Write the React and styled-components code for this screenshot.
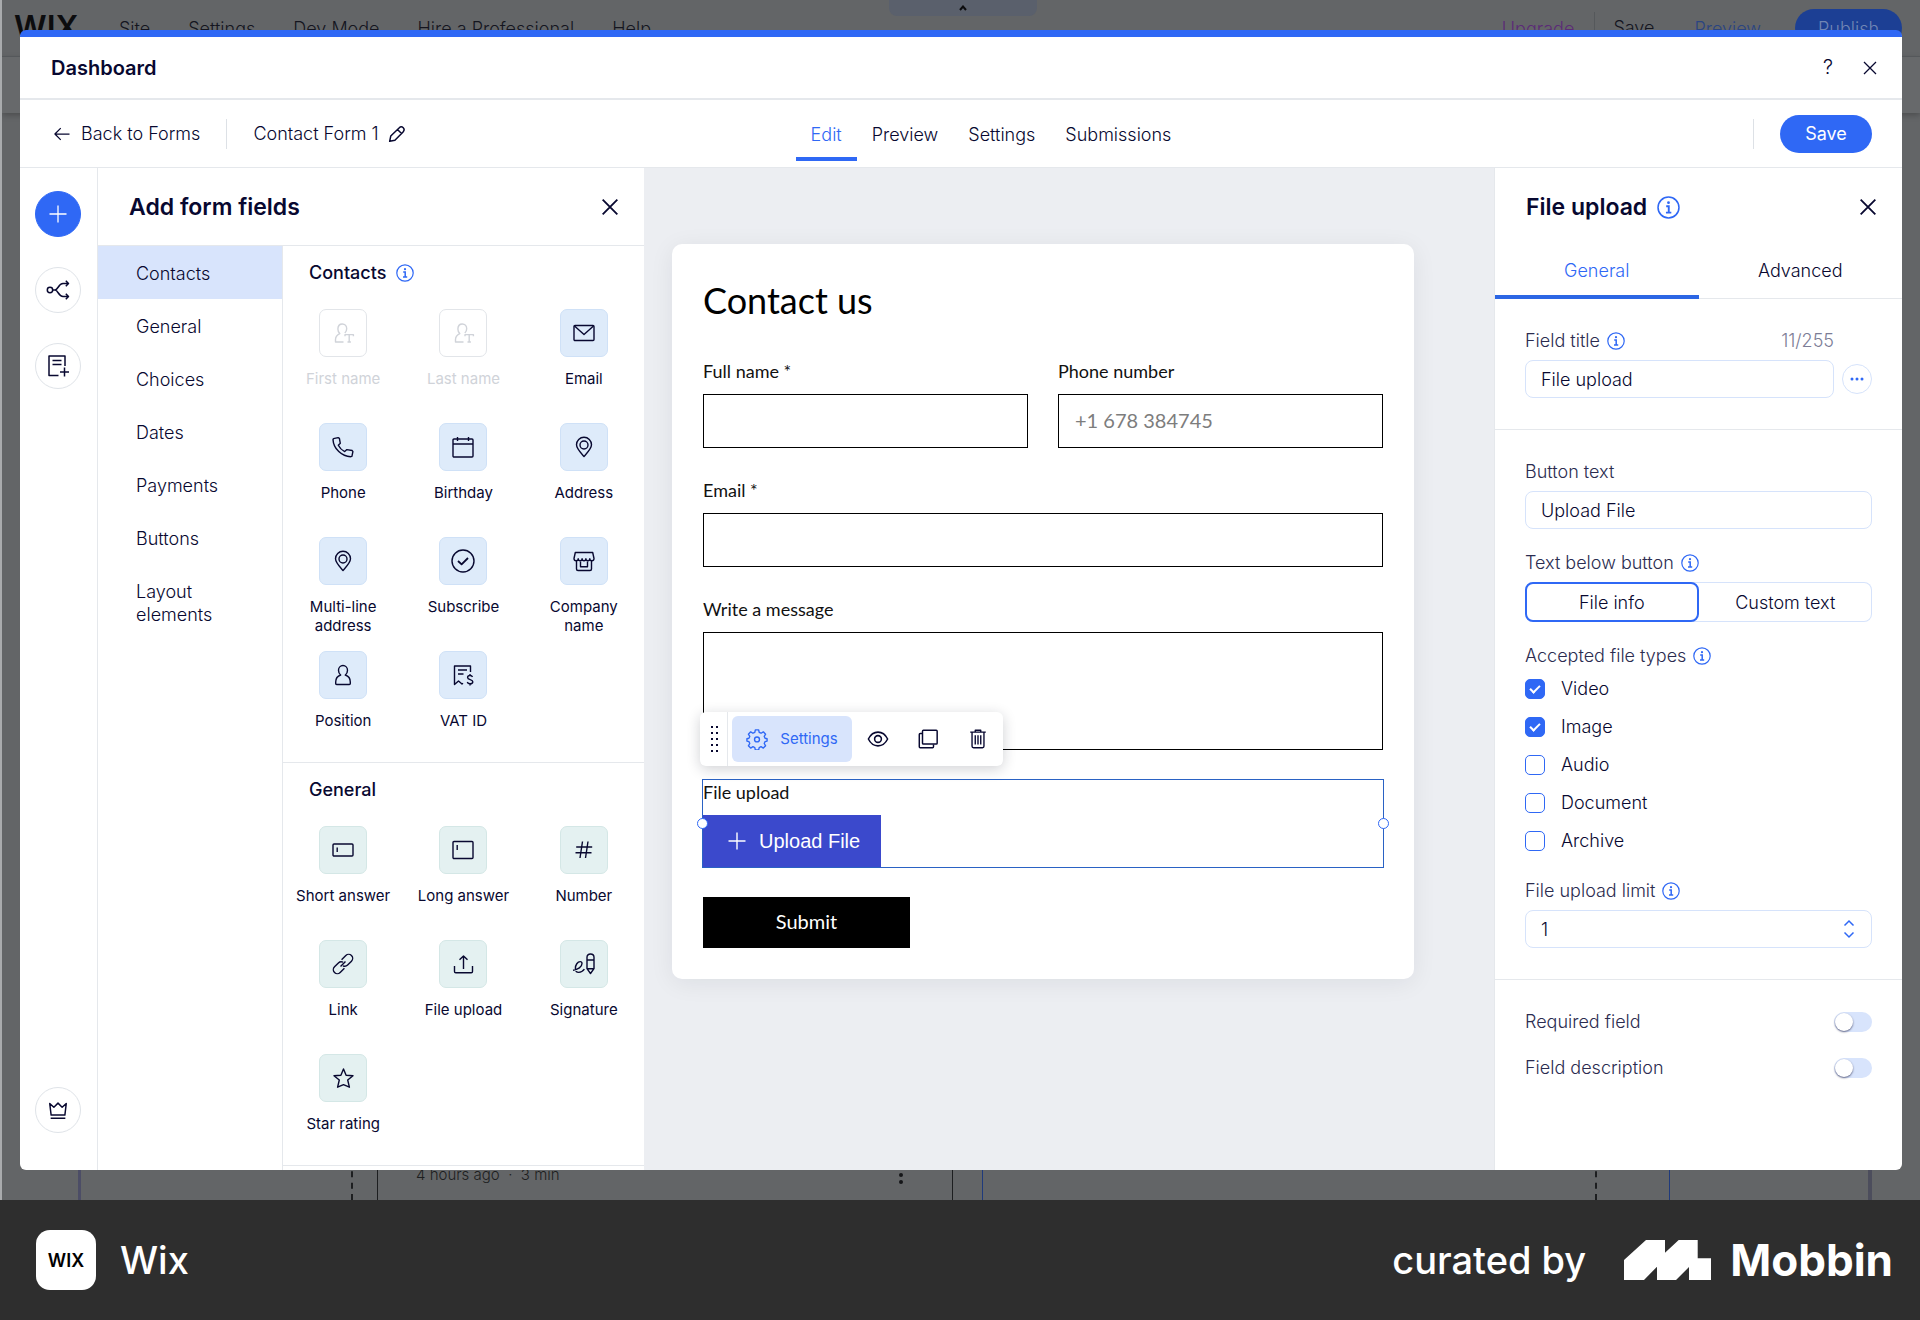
import React from "react";
import styled, { createGlobalStyle, css } from "styled-components";

const ui = `Inter, "Noto Sans", sans-serif`;
const formFont = `Lato, "Open Sans", sans-serif`;
const ink = "#080830";
const muted = "#2b2c50";
const blue = "#2f68f5";
const line = "#e5e8ec";

const GlobalStyle = createGlobalStyle`
  * { box-sizing: border-box; }
  body { margin: 0; font-family: ${ui}; color: ${ink}; background: #2e2e2e; }
  button, input, textarea { font: inherit; color: inherit; margin: 0; }
  button { padding: 0; border: 0; background: none; cursor: pointer; }
  h1, h2, h3, p { margin: 0; font-weight: inherit; font-size: inherit; }
`;

const Page = styled.div`
  min-height: 100vh;
  display: flex;
  flex-direction: column;
`;

const Stage = styled.div`
  flex: 1;
  display: grid;
  > * { grid-area: 1 / 1; min-width: 0; }
`;

/* ---------- dimmed editor ---------- */
const Editor = styled.div`
  display: flex;
  flex-direction: column;
  border-left: 2px solid #a9abad;
  background: #636567;
  overflow: hidden;
  font-size: 18px;
  font-weight: 300;
`;
const EditorBar = styled.div`
  position: relative;
  height: 57px;
  padding: 0 18px 0 12px;
  display: flex;
  align-items: center;
  border-bottom: 1px solid #55585b;
  color: #14151f;
`;
const EditorLogo = styled.span`
  width: 105px;
  font-size: 32px;
  line-height: 40px;
  font-weight: 600;
  color: #0c0c0e;
`;
const EditorMenu = styled.nav`
  display: flex;
  gap: 38px;
  flex: 1;
`;
const EditorLink = styled.a`
  color: ${(p) => p.$color || "#14151f"};
  text-decoration: none;
`;
const EditorActions = styled.div`
  display: flex;
  align-items: center;
  gap: 40px;
`;
const EditorSave = styled.div`
  border-left: 1px solid #55585b;
  margin-left: -20px;
  padding-left: 18px;
  line-height: 32px;
`;
const Publish = styled.button`
  width: 107px;
  height: 38px;
  margin-left: -6px;
  border-radius: 19px;
  background: #1c3f94;
  color: #7186b4;
`;
const PullTab = styled.div`
  position: absolute;
  top: 0;
  left: 887px;
  width: 148px;
  height: 16px;
  display: grid;
  place-items: center;
  border-radius: 0 0 8px 8px;
  background: #5a606c;
`;
const EditorSub = styled.div`
  height: 56px;
  background: #67696b;
  box-shadow: 0 2px 6px rgba(0, 0, 0, 0.25);
`;
const EditorCanvas = styled.div`
  flex: 1;
  position: relative;
`;
const Guide = styled.span`
  position: absolute;
  bottom: 0;
  left: ${(p) => p.$x}px;
  height: 40px;
  border-left: ${(p) => p.$w || 1}px ${(p) => (p.$dashed ? "dashed" : "solid")} ${(p) => p.$color || "#1d1e20"};
`;
const CanvasNote = styled.span`
  position: absolute;
  bottom: 15px;
  left: 414px;
  font-size: 15px;
  line-height: 20px;
  color: #1d1e20;
  white-space: pre;
`;
const CanvasDots = styled.span`
  position: absolute;
  bottom: 16px;
  left: 897px;
  display: grid;
  gap: 3px;
  i { width: 4px; height: 4px; border-radius: 50%; background: #151618; }
`;

/* ---------- modal ---------- */
const Modal = styled.section`
  position: relative;
  margin: 30px 18px 30px 20px;
  display: flex;
  flex-direction: column;
  background: #fff;
  border-top: 7px solid ${blue};
  border-radius: 6px;
  overflow: hidden;
  font-size: 18px;
  font-weight: 300;
  line-height: 23px;
`;
const ModalHeader = styled.header`
  height: 63px;
  padding: 0 20px 0 31px;
  display: flex;
  align-items: center;
  justify-content: space-between;
  border-bottom: 2px solid ${line};
`;
const ModalTitle = styled.h1`
  padding-top: 2px;
  font-size: 20px;
  font-weight: 600;
`;
const HeaderTools = styled.div`
  display: flex;
  align-items: center;
  gap: 18px;
`;
const IconButton = styled.button`
  width: 24px;
  height: 24px;
  display: grid;
  place-items: center;
  font-size: 20px;
`;
const Toolbar = styled.div`
  height: 68px;
  padding: 0 30px 0 32px;
  display: grid;
  grid-template-columns: 1fr auto 1fr;
  align-items: center;
  border-bottom: 1px solid ${line};
`;
const ToolbarSide = styled.div`
  display: flex;
  align-items: center;
  justify-content: ${(p) => (p.$end ? "flex-end" : "flex-start")};
  gap: 26px;
`;
const Divider = styled.span`
  width: 1px;
  height: 30px;
  background: #dde1e6;
`;
const InlineButton = styled.button`
  display: flex;
  align-items: center;
  gap: 9px;
`;
const FormName = styled.div`
  display: flex;
  align-items: center;
  gap: 8px;
`;
const Tabs = styled.nav`
  align-self: start;
  display: flex;
  margin-left: 58px;
`;
const Tab = styled.button`
  height: 61px;
  padding: 11px 15px 0;
  border-bottom: 4px solid ${(p) => (p.$active ? blue : "transparent")};
  color: ${(p) => (p.$active ? blue : ink)};
`;
const SaveButton = styled.button`
  width: 92px;
  height: 38px;
  border-radius: 19px;
  background: ${blue};
  color: #fff;
  font-weight: 400;
`;

const Body = styled.div`
  flex: 1;
  display: grid;
  grid-template-columns: 78px 546px minmax(0, 1fr) 408px;
`;

const Rail = styled.aside`
  padding: 23px 0 37px 15px;
  display: flex;
  flex-direction: column;
  gap: 30px;
  border-right: 1px solid ${line};
`;
const RailButton = styled.button`
  width: 46px;
  height: 46px;
  display: grid;
  place-items: center;
  border-radius: 50%;
  border: 1px solid ${(p) => (p.$primary ? blue : "#dfe3e8")};
  background: ${(p) => (p.$primary ? blue : "#fff")};
  color: ${(p) => (p.$primary ? "#fff" : ink)};
  ${(p) => p.$last && css`margin-top: auto;`}
`;

/* ---------- add fields panel ---------- */
const AddPanel = styled.section`
  display: flex;
  flex-direction: column;
`;
const PanelHeader = styled.header`
  height: 78px;
  padding: 0 22px 0 31px;
  display: flex;
  align-items: center;
  justify-content: space-between;
  ${(p) => p.$ruled && css`border-bottom: 1px solid ${line};`}
`;
const PanelTitle = styled.h2`
  display: flex;
  align-items: center;
  gap: 10px;
  font-size: 23px;
  line-height: 30px;
  font-weight: 600;
`;
const PanelColumns = styled.div`
  flex: 1;
  display: grid;
  grid-template-columns: 185px 1fr;
`;
const Categories = styled.nav`
  border-right: 1px solid ${line};
  display: flex;
  flex-direction: column;
`;
const Category = styled.button`
  padding: 16px 38px 14px;
  text-align: left;
  background: ${(p) => (p.$active ? "#d8e4fc" : "transparent")};
`;
const FieldSection = styled.section`
  padding: 16px 0 13px;
  border-bottom: 1px solid ${line};
`;
const SectionTitle = styled.h3`
  display: flex;
  align-items: center;
  gap: 10px;
  padding-left: 26px;
  margin-bottom: 25px;
  line-height: 22px;
  font-weight: 500;
`;
const FieldGrid = styled.div`
  display: grid;
  grid-template-columns: repeat(3, 1fr);
  grid-auto-rows: 98px;
  gap: 16px 0;
`;
const Field = styled.button`
  display: flex;
  flex-direction: column;
  align-items: center;
  gap: 12px;
  font-size: 15px;
  line-height: 19px;
  font-weight: 400;
  color: ${(p) => (p.disabled ? "#d0d3d9" : ink)};
`;
const tones = {
  blue: ["#deebfa", "#cfe1f7"],
  green: ["#e4f1f1", "#d4e7e6"],
  off: ["#fff", "#e2e5e9"],
};
const Tile = styled.span`
  width: 48px;
  height: 48px;
  display: grid;
  place-items: center;
  border-radius: 7px;
  background: ${(p) => tones[p.$tone][0]};
  border: 1px solid ${(p) => tones[p.$tone][1]};
`;
const TileLabel = styled.span`
  max-width: 104px;
`;

/* ---------- canvas ---------- */
const Canvas = styled.main`
  padding: 76px 80px 76px 28px;
  background: #eceef2;
  font-family: ${formFont};
  font-weight: 400;
  color: #111;
`;
const Card = styled.form`
  display: flex;
  flex-direction: column;
  gap: 30px;
  padding: 31px;
  border-radius: 10px;
  background: #fff;
  box-shadow: 0 4px 24px rgba(20, 23, 40, 0.07);
  font-size: 18px;
  line-height: 24px;
`;
const CardTitle = styled.h2`
  padding-bottom: 4px;
  font-size: 36px;
  line-height: 50px;
  color: #000;
`;
const FormRow = styled.div`
  display: grid;
  grid-template-columns: 1fr 1fr;
  gap: 30px;
`;
const FormField = styled.div`
  display: flex;
  flex-direction: column;
  align-items: flex-start;
  gap: 11px;
`;
const control = css`
  width: 100%;
  padding: 0 16px 2px;
  border: 1px solid #000;
  border-radius: 0;
  background: #fff;
  font-size: 20px;
  &::placeholder { color: #7d7d7d; opacity: 1; }
`;
const FormInput = styled.input`
  ${control}
  height: 54px;
`;
const FormArea = styled.textarea`
  ${control}
  height: 118px;
  resize: none;
  display: block;
`;
const SelectedField = styled(FormField)`
  position: relative;
  &::after {
    content: "";
    position: absolute;
    inset: -1px;
    border: 1px solid #2a62c4;
    pointer-events: none;
  }
`;
const Handle = styled.span`
  position: absolute;
  z-index: 1;
  top: 50%;
  ${(p) => p.$side}: -6px;
  width: 11px;
  height: 11px;
  margin-top: -6px;
  border: 1px solid ${blue};
  border-radius: 50%;
  background: #fff;
`;
const UploadButton = styled.button`
  height: 52px;
  padding: 0 21px 0 22px;
  display: flex;
  align-items: center;
  gap: 10px;
  background: #3b49cc;
  color: #fff;
  font: 20px "Liberation Sans", sans-serif;
`;
const SubmitButton = styled.button`
  width: 207px;
  height: 51px;
  padding-bottom: 3px;
  background: #000;
  color: #fff;
  font-size: 20px;
`;
const FloatingBar = styled.div`
  position: absolute;
  z-index: 2;
  left: -3px;
  top: -68px;
  height: 54px;
  display: flex;
  align-items: center;
  border-radius: 6px;
  background: #fff;
  box-shadow: 0 3px 14px rgba(20, 23, 40, 0.2);
  color: ${ink};
  font: 15px/20px ${ui};
`;
const Grip = styled.span`
  width: 28px;
  height: 54px;
  padding-left: 3px;
  display: grid;
  place-items: center;
  border-right: 1px solid ${line};
`;
const BarSettings = styled.button`
  width: 120px;
  height: 46px;
  margin: 0 1px 0 4px;
  display: flex;
  align-items: center;
  justify-content: center;
  gap: 12px;
  border-radius: 6px;
  background: #d8e4fc;
  color: ${blue};
`;
const BarButton = styled.button`
  width: 50px;
  height: 46px;
  display: grid;
  place-items: center;
`;

/* ---------- settings panel ---------- */
const Settings = styled.aside`
  border-left: 1px solid ${line};
`;
const SideTabs = styled.div`
  display: grid;
  grid-template-columns: 1fr 1fr;
  border-bottom: 1px solid ${line};
`;
const SideTab = styled.button`
  height: 53px;
  margin-bottom: -1px;
  border-bottom: 4px solid ${(p) => (p.$active ? "#2c66e4" : "transparent")};
  color: ${(p) => (p.$active ? blue : ink)};
`;
const Group = styled.div`
  padding: 30px 30px 31px;
  display: flex;
  flex-direction: column;
  gap: 22px;
  ${(p) => p.$ruled && css`border-bottom: 1px solid ${line};`}
`;
const Setting = styled.div`
  display: flex;
  flex-direction: column;
  gap: 7px;
`;
const LabelRow = styled.div`
  display: flex;
  align-items: center;
  gap: 7px;
  color: ${muted};
  line-height: 24px;
`;
const Counter = styled.span`
  margin-left: auto;
  padding-right: 38px;
  color: #7c7d96;
`;
const InputRow = styled.div`
  display: flex;
  align-items: center;
  gap: 8px;
`;
const TextBox = styled.input`
  flex: 1;
  min-width: 0;
  height: 38px;
  padding: 0 15px;
  border: 1px solid #d6e3fb;
  border-radius: 8px;
  background: #fff;
  outline: 0;
`;
const MoreButton = styled.button`
  width: 30px;
  height: 30px;
  display: grid;
  place-items: center;
  border: 1px solid #d6e3fb;
  border-radius: 50%;
  color: ${blue};
`;
const Segments = styled.div`
  display: grid;
  grid-template-columns: 1fr 1fr;
  height: 40px;
  border-radius: 8px;
  box-shadow: inset 0 0 0 1px #d6e3fb;
`;
const Segment = styled.button`
  border-radius: 8px;
  ${(p) => p.$active && css`border: 2px solid ${blue};`}
`;
const Checks = styled.div`
  padding: 2px 0 4px;
  display: flex;
  flex-direction: column;
  gap: 14px;
`;
const CheckRow = styled.label`
  display: flex;
  align-items: center;
  gap: 16px;
  line-height: 24px;
`;
const CheckBox = styled.input`
  appearance: none;
  width: 20px;
  height: 20px;
  display: grid;
  place-items: center;
  border: 1px solid ${blue};
  border-radius: 5px;
  background: #fff;
  &:checked { background: ${blue}; }
  &:checked::before {
    content: "";
    width: 8px;
    height: 4px;
    margin-top: -3px;
    border-left: 2px solid #fff;
    border-bottom: 2px solid #fff;
    transform: rotate(-45deg);
  }
`;
const NumberWrap = styled.div`
  display: flex;
  align-items: center;
  height: 38px;
  padding-right: 16px;
  border: 1px solid #d6e3fb;
  border-radius: 8px;
  color: ${blue};
`;
const NumberBox = styled.input`
  flex: 1;
  min-width: 0;
  padding: 0 15px;
  border: 0;
  outline: 0;
  background: none;
  color: ${ink};
  appearance: textfield;
  &::-webkit-inner-spin-button { display: none; }
`;
const SwitchRow = styled.label`
  display: flex;
  align-items: center;
  justify-content: space-between;
  line-height: 24px;
  color: ${muted};
`;
const Switch = styled.input`
  appearance: none;
  width: 38px;
  height: 20px;
  border-radius: 10px;
  background: #d8e4fc;
  &::before {
    content: "";
    display: block;
    width: 18px;
    height: 18px;
    margin: 1px;
    border-radius: 50%;
    background: #fff;
    box-shadow: 0 1px 2px rgba(8, 8, 48, 0.6);
  }
`;

/* ---------- footer ---------- */
const Footer = styled.footer`
  height: 120px;
  padding: 0 27px 0 36px;
  display: flex;
  align-items: center;
  justify-content: space-between;
  background: #2e2e2e;
  color: #fff;
  font-size: 38px;
  font-weight: 500;
`;
const FooterSide = styled.div`
  display: flex;
  align-items: center;
  gap: ${(p) => p.$gap}px;
`;
const AppIcon = styled.span`
  width: 60px;
  height: 60px;
  display: grid;
  place-items: center;
  border-radius: 14px;
  background: #fff;
  color: #000;
  font-size: 18px;
  font-weight: 600;
`;
const MobbinMark = styled.span`
  display: flex;
  align-items: center;
  gap: 19px;
  font-size: 44px;
  font-weight: 700;
`;

/* ---------- icons ---------- */
const Svg = ({ size = 24, w = 1.4, children, box = 24 }) => (
  <svg width={size} height={size} viewBox={`0 0 ${box} ${box}`} fill="none" stroke="currentColor" strokeWidth={w} strokeLinejoin="round" aria-hidden="true">
    {children}
  </svg>
);

const InfoSvg = styled.svg`
  color: ${blue};
  flex: none;
`;
const Info = ({ size = 18 }) => (
  <InfoSvg width={size} height={size} viewBox="0 0 18 18" fill="none" stroke="currentColor" strokeWidth="1.2" role="img" aria-label="More info">
    <circle cx="9" cy="9" r="8.2" />
    <circle cx="9" cy="5.2" r="1.1" fill="currentColor" stroke="none" />
    <path d="M7.2 8h2v5M7 13h4.2" strokeWidth="1.5" />
  </InfoSvg>
);

const personT = (
  <>
    <path d="M12.500 21H4.500v-2.500C4.500 15.800 6 14 8.800 12.600 7.500 11.600 6.900 10 6.900 8c0-3 1.900-5 4.400-5s4.400 2 4.400 4.700c0 1.800-.7 3.200-1.900 4.300" />
    <path d="M14 15.300V13.600h8.400v1.700M18.200 13.600V21M16.500 21h3.400" />
  </>
);
const pin = (
  <>
    <path d="M12 21.500C8 17 4.500 13.500 4.500 9.800a7.500 7.500 0 0 1 15 0C19.500 13.500 16 17 12 21.500z" />
    <circle cx="12" cy="10" r="4" />
  </>
);
const icons = {
  person: personT,
  mail: (
    <>
      <rect x="2" y="4.500" width="20" height="15" rx="1" />
      <path d="M2.500 5l9.500 8.500L21.500 5" />
    </>
  ),
  phone: (
    <path d="M2.500 3.600l4.600-1 1.300.8.9 4.900-2 2c1.500 3 3.300 4.800 6.400 6.300l2.200-2 5.300.9.700 1.200-1 4.600-1.200.4C11 21.500 2.500 14 2 4.600z" />
  ),
  calendar: (
    <>
      <rect x="2" y="4" width="20" height="18" rx="1" />
      <path d="M2 9h20M6.500 2v4M17.500 2v4" />
    </>
  ),
  pin,
  check: (
    <>
      <circle cx="12" cy="12" r="11" />
      <path d="M7 12l3.600 3.400L17 9" strokeWidth="1.8" />
    </>
  ),
  store: (
    <>
      <path d="M3.300 3.500h17.400l1.300 6c0 1.400-1 2.200-2.200 2.200s-2-.8-2-2c0 1.200-.8 2-1.900 2s-2-.8-2-2c0 1.200-.8 2-1.900 2s-1.900-.8-1.900-2c0 1.200-.8 2-2 2s-1.900-.8-1.900-2c0 1.200-.8 2-2 2S2 10.900 2 9.500z" />
      <path d="M4.500 11.700V20c0 .9.600 1.500 1.500 1.500h12c.9 0 1.500-.6 1.500-1.500v-8.300M8.500 12.500v5.200h7v-5.200" />
    </>
  ),
  position: (
    <path d="M9.700 12C8.300 11 7.500 9.400 7.500 7.300 7.500 4.600 9.500 2.500 12 2.500s4.500 2.100 4.500 4.800c0 2.100-.8 3.700-2.200 4.700 3 1 5 3.500 5 7v1.500c0 .6-.4 1-1 1H5.700c-.6 0-1-.4-1-1V19c0-3.500 2-6 5-7z" />
  ),
  vat: (
    <>
      <path d="M19.500 9V3h-16v18.500l4-3.500 3.500 3 1-.8M7 7h9M7 11h5.500" />
      <path d="M21.500 14c-.4-1-1.300-1.500-2.500-1.500-1.400 0-2.400.8-2.400 1.900 0 2.800 5.200 1.500 5.200 4.300 0 1.200-1.100 2.100-2.700 2.100-1.400 0-2.500-.7-2.800-1.800M19 11v1.500M19 21v1.600" />
    </>
  ),
  short: (
    <>
      <rect x="2" y="6" width="20" height="12" rx="1" />
      <path d="M6.200 9.500v4.500" />
    </>
  ),
  long: (
    <>
      <rect x="2" y="3.500" width="20" height="17" rx="1" />
      <path d="M6.200 7v5" />
    </>
  ),
  hash: <path d="M10.500 3.500l-2.500 16.500M16 3.500l-2.500 16.500M4.200 9h16M3.500 14.700h16" />,
  link: (
    <g transform="rotate(-45 12 12)">
      <path d="M10 16H4a4 4 0 0 1 0-8h5.500a4 4 0 0 1 3.800 2.800M14 8h6a4 4 0 0 1 0 8h-5.500a4 4 0 0 1-3.800-2.800M8.500 12h7" />
    </g>
  ),
  upload: <path d="M12.500 17V4M8.500 7.800l4-3.900 4 3.900M3.500 14v5.500c0 .8.500 1.300 1.300 1.300h15.400c.8 0 1.300-.5 1.300-1.300V14" />,
  signature: (
    <>
      <path d="M1 18.200c5-.6 9-3.400 9-6.600 0-1.200-.7-2-1.800-2-2.700 0-4.800 3.500-4.800 6.600 0 2.600 1.200 4.200 3.300 4.200 2.500 0 4.500-1.500 5.700-3.200" />
      <path d="M15 5.200c0-1.900 1.400-3.200 3.500-3.200S22 3.300 22 5.200v11.500l-3.500 4.800-3.500-4.800zM15 8h7M15 16.700h7" />
    </>
  ),
  star: <path d="M12.500 3l2.600 6.200 6.900.5-5.300 4.300 1.700 7.200-5.900-2.600-5.900 2.600 1.700-7.200L3 9.700l6.900-.5z" />,
  plus: <path d="M12 3.500v17M3.500 12h17" />,
  flow: (
    <>
      <circle cx="4" cy="12" r="2.700" />
      <path d="M6.700 12H9c3 0 3.500-6.500 8-6.500h5M9 12c3 0 3.500 6.500 8 6.500h5M19.800 2.800l2.700 2.700-2.700 2.700M19.800 15.800l2.700 2.700-2.700 2.700" />
    </>
  ),
  notePlus: (
    <>
      <path d="M19 12V2H3v19.500h9.500M6.500 6.500h9M6.500 10.500h9M18.500 13.500v9M14 18h9" />
    </>
  ),
  crown: <path d="M4.500 17.500L3 5l4.500 4L12 4.500 16.500 9 21 5l-1.500 12.500zM4 21h16" />,
  close: <path d="M4 4l16 16M20 4L4 20" />,
  back: <path d="M21 12H3.500M10.500 5l-7 7 7 7" />,
  pencil: (
    <path d="M14.500 4.700c1.700-1.700 3.500-1.700 5-.2s1.500 3.300-.2 5L9.500 19.500 3.200 20.800 4.500 14.500zM12.500 6.500l5 5" />
  ),
  gear: (
    <>
      <path d="M10.200 2h3.600l.6 2.800 2 .9 2.500-1.500 2.500 2.500-1.500 2.500.9 2 2.200.5v2.600l-2.300.6-.8 2 1.500 2.500-2.500 2.500-2.500-1.500-2 .9-.6 2.700h-3.600l-.6-2.700-2-.9-2.500 1.500-2.500-2.500 1.500-2.500-.8-2-2.300-.6v-2.600l2.200-.5.9-2-1.500-2.500 2.500-2.500 2.500 1.500 2-.9z" />
      <circle cx="12" cy="12.500" r="2.700" />
    </>
  ),
  eye: (
    <>
      <path d="M1.500 12C4 7 7.500 4.500 12 4.500S20 7 22.500 12C20 17 16.500 19.500 12 19.500S4 17 1.500 12z" />
      <circle cx="12" cy="12" r="3.700" />
    </>
  ),
  copy: (
    <>
      <rect x="6" y="2.500" width="16" height="15" rx="1" />
      <path d="M6 6H3.500c-.6 0-1 .4-1 1v13.500c0 .6.400 1 1 1h13.500c.6 0 1-.4 1-1V18" />
    </>
  ),
  trash: (
    <path d="M3.500 4.500h17M9 4.500V2.500h6v2M5.500 4.500V20c0 1 .6 1.600 1.600 1.600h9.800c1 0 1.600-.6 1.600-1.600V4.500M9 8v10M12 8v10M15 8v10" />
  ),
};
const Icon = ({ name, size, w }) => (
  <Svg size={size} w={w}>{icons[name]}</Svg>
);

const contactFields = [
  ["First name", "person", "off"],
  ["Last name", "person", "off"],
  ["Email", "mail"],
  ["Phone", "phone"],
  ["Birthday", "calendar"],
  ["Address", "pin"],
  ["Multi-line address", "pin"],
  ["Subscribe", "check"],
  ["Company name", "store"],
  ["Position", "position"],
  ["VAT ID", "vat"],
];
const generalFields = [
  ["Short answer", "short"],
  ["Long answer", "long"],
  ["Number", "hash"],
  ["Link", "link"],
  ["File upload", "upload"],
  ["Signature", "signature"],
  ["Star rating", "star"],
];

const FieldList = ({ fields, tone }) => (
  <FieldGrid>
    {fields.map(([label, icon, own]) => (
      <Field key={label} type="button" disabled={own === "off"}>
        <Tile $tone={own || tone}>
          <Icon name={icon} />
        </Tile>
        <TileLabel>{label}</TileLabel>
      </Field>
    ))}
  </FieldGrid>
);

const DimmedEditor = () => (
  <Editor>
    <EditorBar>
      <EditorLogo>WIX</EditorLogo>
      <EditorMenu>
        {["Site", "Settings", "Dev Mode", "Hire a Professional", "Help"].map((t) => (
          <EditorLink href="#" key={t}>{t}</EditorLink>
        ))}
      </EditorMenu>
      <EditorActions>
        <EditorLink href="#" $color="#5b2a78">Upgrade</EditorLink>
        <EditorSave>Save</EditorSave>
        <EditorLink href="#" $color="#2a4482">Preview</EditorLink>
        <Publish type="button">Publish</Publish>
      </EditorActions>
      <PullTab>
        <svg width="8" height="6" viewBox="0 0 8 6" fill="none" stroke="#0c0c0e" strokeWidth="2"><path d="M1 5l3-3.500L7 5" /></svg>
      </PullTab>
    </EditorBar>
    <EditorSub />
    <EditorCanvas>
      <Guide $x={76} $w={3} $color="#4c4d66" />
      <Guide $x={349} $w={2} $dashed />
      <Guide $x={375} />
      <CanvasNote>4 hours ago  ·  3 min</CanvasNote>
      <CanvasDots><i /><i /></CanvasDots>
      <Guide $x={950} />
      <Guide $x={980} $color="#1f3a7c" />
      <Guide $x={1593} $w={2} $dashed />
      <Guide $x={1667} $color="#1f3a7c" />
      <Guide $x={1866} $w={4} $color="#4c4d5c" />
    </EditorCanvas>
  </Editor>
);

const AddFields = () => (
  <AddPanel>
    <PanelHeader $ruled>
      <PanelTitle>Add form fields</PanelTitle>
      <IconButton type="button" aria-label="Close panel"><Icon name="close" size={22} w={2} /></IconButton>
    </PanelHeader>
    <PanelColumns>
      <Categories>
        {["Contacts", "General", "Choices", "Dates", "Payments", "Buttons", "Layout elements"].map((c, i) => (
          <Category type="button" key={c} $active={i === 0}>{c}</Category>
        ))}
      </Categories>
      <div>
        <FieldSection>
          <SectionTitle>Contacts <Info /></SectionTitle>
          <FieldList fields={contactFields} tone="blue" />
        </FieldSection>
        <FieldSection>
          <SectionTitle>General</SectionTitle>
          <FieldList fields={generalFields} tone="green" />
        </FieldSection>
      </div>
    </PanelColumns>
  </AddPanel>
);

const FormPreview = () => (
  <Canvas>
    <Card onSubmit={(e) => e.preventDefault()}>
      <CardTitle>Contact us</CardTitle>
      <FormRow>
        <FormField>
          <label htmlFor="full">Full name *</label>
          <FormInput id="full" />
        </FormField>
        <FormField>
          <label htmlFor="phone">Phone number</label>
          <FormInput id="phone" placeholder="+1 678 384745" />
        </FormField>
      </FormRow>
      <FormField>
        <label htmlFor="email">Email *</label>
        <FormInput id="email" />
      </FormField>
      <FormField>
        <label htmlFor="message">Write a message</label>
        <FormArea id="message" />
      </FormField>
      <SelectedField>
        <span id="upload-label">File upload</span>
        <UploadButton type="button">
          <Icon name="plus" size={24} w={1.4} />
          Upload File
        </UploadButton>
        <Handle $side="left" />
        <Handle $side="right" />
        <FloatingBar>
          <Grip>
            <svg width="8" height="26" viewBox="0 0 8 26" fill={ink}>
              {[1, 7, 13, 19, 25].map((y) => (
                <React.Fragment key={y}>
                  <rect x="0" y={y - 1} width="2" height="2" />
                  <rect x="5" y={y - 1} width="2" height="2" />
                </React.Fragment>
              ))}
            </svg>
          </Grip>
          <BarSettings type="button"><Icon name="gear" size={22} w={1.5} />Settings</BarSettings>
          <BarButton type="button" aria-label="Preview"><Icon name="eye" size={22} w={1.7} /></BarButton>
          <BarButton type="button" aria-label="Duplicate"><Icon name="copy" size={22} w={1.6} /></BarButton>
          <BarButton type="button" aria-label="Delete"><Icon name="trash" size={22} w={1.5} /></BarButton>
        </FloatingBar>
      </SelectedField>
      <SubmitButton type="submit">Submit</SubmitButton>
    </Card>
  </Canvas>
);

const FieldSettings = () => (
  <Settings>
    <PanelHeader>
      <PanelTitle>File upload <Info size={23} /></PanelTitle>
      <IconButton type="button" aria-label="Close settings"><Icon name="close" size={22} w={2} /></IconButton>
    </PanelHeader>
    <SideTabs>
      <SideTab type="button" $active>General</SideTab>
      <SideTab type="button">Advanced</SideTab>
    </SideTabs>
    <Group $ruled>
      <Setting>
        <LabelRow>
          <label htmlFor="title">Field title</label>
          <Info />
          <Counter>11/255</Counter>
        </LabelRow>
        <InputRow>
          <TextBox id="title" defaultValue="File upload" />
          <MoreButton type="button" aria-label="More">
            <svg width="14" height="4" viewBox="0 0 14 4" fill="currentColor"><circle cx="2" cy="2" r="1.5" /><circle cx="7" cy="2" r="1.500" /><circle cx="12" cy="2" r="1.500" /></svg>
          </MoreButton>
        </InputRow>
      </Setting>
    </Group>
    <Group $ruled>
      <Setting>
        <LabelRow><label htmlFor="button-text">Button text</label></LabelRow>
        <InputRow><TextBox id="button-text" defaultValue="Upload File" /></InputRow>
      </Setting>
      <Setting>
        <LabelRow>Text below button <Info /></LabelRow>
        <Segments>
          <Segment type="button" aria-pressed="true" $active>File info</Segment>
          <Segment type="button" aria-pressed="false">Custom text</Segment>
        </Segments>
      </Setting>
      <Setting>
        <LabelRow>Accepted file types <Info /></LabelRow>
        <Checks>
          {["Video", "Image", "Audio", "Document", "Archive"].map((t, i) => (
            <CheckRow key={t}><CheckBox type="checkbox" defaultChecked={i < 2} />{t}</CheckRow>
          ))}
        </Checks>
      </Setting>
      <Setting>
        <LabelRow><label htmlFor="limit">File upload limit</label><Info /></LabelRow>
        <NumberWrap>
          <NumberBox id="limit" type="number" defaultValue={1} />
          <svg width="12" height="20" viewBox="0 0 12 20" fill="none" stroke="currentColor" strokeWidth="1.5"><path d="M1.500 6.500L6 2l4.500 4.500M1.500 13.500L6 18l4.500-4.500" /></svg>
        </NumberWrap>
      </Setting>
    </Group>
    <Group>
      <SwitchRow>Required field <Switch type="checkbox" role="switch" /></SwitchRow>
      <SwitchRow>Field description <Switch type="checkbox" role="switch" /></SwitchRow>
    </Group>
  </Settings>
);

export default function App() {
  return (
    <Page>
      <GlobalStyle />
      <Stage>
        <DimmedEditor />
        <Modal>
          <ModalHeader>
            <ModalTitle>Dashboard</ModalTitle>
            <HeaderTools>
              <IconButton type="button">?</IconButton>
              <IconButton type="button" aria-label="Close dashboard"><Icon name="close" size={18} w={1.7} /></IconButton>
            </HeaderTools>
          </ModalHeader>
          <Toolbar>
            <ToolbarSide>
              <InlineButton type="button"><Icon name="back" size={20} w={1.5} /> Back to Forms</InlineButton>
              <Divider />
              <FormName>Contact Form 1 <Icon name="pencil" size={20} w={1.8} /></FormName>
            </ToolbarSide>
            <Tabs>
              {["Edit", "Preview", "Settings", "Submissions"].map((t, i) => (
                <Tab type="button" key={t} $active={i === 0}>{t}</Tab>
              ))}
            </Tabs>
            <ToolbarSide $end>
              <Divider />
              <SaveButton type="button">Save</SaveButton>
            </ToolbarSide>
          </Toolbar>
          <Body>
            <Rail>
              <RailButton type="button" aria-label="Add field" $primary><Icon name="plus" size={24} w={1.3} /></RailButton>
              <RailButton type="button" aria-label="Rules"><Icon name="flow" w={1.5} /></RailButton>
              <RailButton type="button" aria-label="Add page"><Icon name="notePlus" w={1.5} /></RailButton>
              <RailButton type="button" aria-label="Upgrade" $last><Icon name="crown" size={22} w={1.6} /></RailButton>
            </Rail>
            <AddFields />
            <FormPreview />
            <FieldSettings />
          </Body>
        </Modal>
      </Stage>
      <Footer>
        <FooterSide $gap={24}>
          <AppIcon>WIX</AppIcon>
          Wix
        </FooterSide>
        <FooterSide $gap={38}>
          curated by
          <MobbinMark>
            <svg width="87" height="40" viewBox="0 0 87 40" fill="#fff" aria-hidden="true">
              <path d="M0 20L22 0h19v12.700L54.700 0h19v18.300H87V40H65V27L52 40H33V26.700L20 40H0z" />
            </svg>
            Mobbin
          </MobbinMark>
        </FooterSide>
      </Footer>
    </Page>
  );
}
